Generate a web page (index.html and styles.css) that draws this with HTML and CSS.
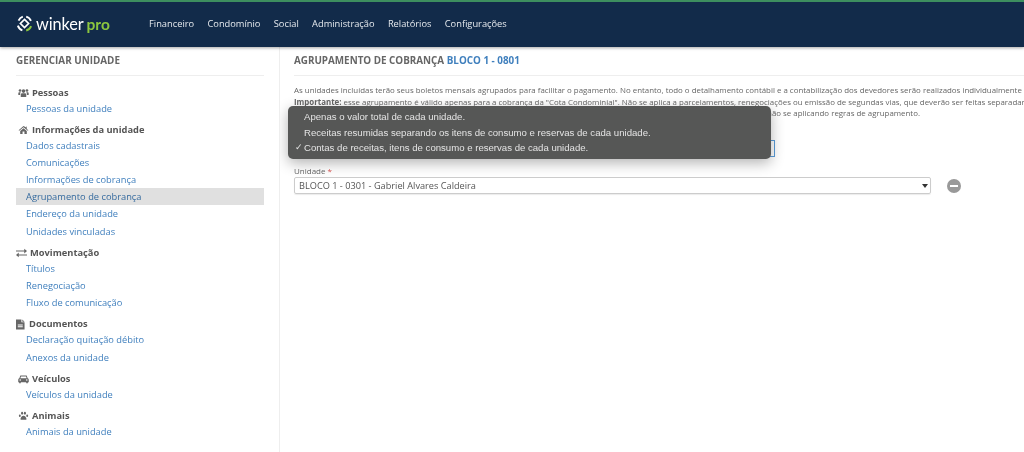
FILE: index.html
```html
<!DOCTYPE html>
<html lang="pt-BR">
<head>
<meta charset="utf-8">
<title>Agrupamento de cobrança</title>
<link rel="stylesheet" href="styles.css">
</head>
<body>
<header class="topbar">
  <div class="logo">
    <svg class="logo-mark" viewBox="0 0 20 20" width="17" height="17" aria-hidden="true">
      <path d="M3 6.500 A8.400 8.400 0 0 1 8 1.900" fill="none" stroke="#fff" stroke-width="2.200"/>
      <path d="M12 1.900 A8.400 8.400 0 0 1 17.600 7" fill="none" stroke="#fff" stroke-width="2.200"/>
      <path d="M2.200 12.500 A8.400 8.400 0 0 0 7.500 18" fill="none" stroke="#fff" stroke-width="2.200"/>
      <path d="M12 18.200 A8.400 8.400 0 0 0 17.800 13" fill="none" stroke="#8cc63f" stroke-width="2.200"/>
      <path d="M10 5.200 L14.800 10 L10 14.800 L5.200 10 Z" fill="none" stroke="#fff" stroke-width="2"/>
    </svg>
    <span class="logo-name">winker</span><span class="logo-pro">pro</span>
  </div>
  <nav class="mainnav">
    <a>Financeiro</a><a>Condomínio</a><a>Social</a><a>Administração</a><a>Relatórios</a><a>Configurações</a>
  </nav>
</header>
<div class="page">
  <aside class="sidebar">
    <h2 class="side-title">GERENCIAR UNIDADE</h2>
    <section class="group g-first">
      <h3><svg class="ico" viewBox="0 0 14 12"><circle cx="7" cy="3.600" r="2.300"/><circle cx="2.600" cy="2.800" r="1.700"/><circle cx="11.400" cy="2.800" r="1.700"/><path d="M3.500 11V8.200C3.500 6.800 4.600 6.200 5.500 6.200H8.500C9.400 6.200 10.500 6.800 10.500 8.200V11Z"/><path d="M.4 8.500V6.200C.4 5.300 1.100 5 1.800 5H3.600C3 5.600 2.700 6.500 2.700 7.500V8.500Z"/><path d="M13.600 8.500V6.200C13.600 5.300 12.900 5 12.200 5H10.400C11 5.600 11.300 6.500 11.300 7.500V8.500Z"/></svg>Pessoas</h3>
      <a>Pessoas da unidade</a>
    </section>
    <section class="group">
      <h3><svg class="ico" viewBox="0 0 14 12"><path d="M7 1 .8 6.300l.7.8L7 2.500l5.500 4.600.7-.8-2-1.700V1.500H10.500v1.300Z"/><path d="M2.800 7.300 7 3.800l4.200 3.500V11H8.200V8H5.800v3H2.800Z"/></svg>Informações da unidade</h3>
      <a>Dados cadastrais</a>
      <a>Comunicações</a>
      <a>Informações de cobrança</a>
      <a class="active">Agrupamento de cobrança</a>
      <a>Endereço da unidade</a>
      <a>Unidades vinculadas</a>
    </section>
    <section class="group">
      <h3 class="wide"><svg class="ico" viewBox="0 0 14 12"><path d="M0 3.300h10.500V1L14 4l-3.500 3V4.600H0Z" transform="translate(0 -.5)"/><path d="M14 7.400H3.500V5L0 8l3.500 3V8.700H14Z" transform="translate(0 .5)"/></svg>Movimentação</h3>
      <a>Títulos</a>
      <a>Renegociação</a>
      <a>Fluxo de comunicação</a>
    </section>
    <section class="group">
      <h3 class="doc"><svg class="ico-doc" viewBox="0 0 10 12"><path d="M0 .5h6v3h3.500v8H0Z"/><path d="M7 .5 9.500 3H7Z"/><path d="M2 6h5.500v1H2Zm0 2h5.500v1H2Z" fill="#fff"/></svg>Documentos</h3>
      <a>Declaração quitação débito</a>
      <a>Anexos da unidade</a>
    </section>
    <section class="group">
      <h3><svg class="ico" viewBox="0 0 14 12"><path d="M3 1.500h8l1.300 3.500c.9.300 1.400 1 1.400 1.900V10h-1.200v1.500h-2V10H3.500v1.500h-2V10H.3V6.900C.3 6 .8 5.300 1.700 5Zm.9 1.200L3 5h8l-.9-2.300ZM2.800 6.300a1 1 0 1 0 0 2 1 1 0 0 0 0-2Zm8.400 0a1 1 0 1 0 0 2 1 1 0 0 0 0-2Z" fill-rule="evenodd"/></svg>Veículos</h3>
      <a>Veículos da unidade</a>
    </section>
    <section class="group">
      <h3><svg class="ico" viewBox="0 0 14 12"><ellipse cx="5.200" cy="2.600" rx="1.300" ry="1.900"/><ellipse cx="8.800" cy="2.600" rx="1.300" ry="1.900"/><ellipse cx="2.300" cy="5.600" rx="1.200" ry="1.600"/><ellipse cx="11.700" cy="5.600" rx="1.200" ry="1.600"/><path d="M7 5.600c-1.800 0-3.800 2.400-3.800 4.100 0 1.500 1.700 1.200 3.800 1 2.100.2 3.800.5 3.800-1 0-1.700-2-4.100-3.800-4.100Z"/></svg>Animais</h3>
      <a>Animais da unidade</a>
    </section>
  </aside>
  <main class="content">
    <h1 class="page-title">AGRUPAMENTO DE COBRANÇA <span class="unit">BLOCO 1 - 0801</span></h1>
    <div class="intro">
      <p>As unidades incluídas terão seus boletos mensais agrupados para facilitar o pagamento. No entanto, todo o detalhamento contábil e a contabilização dos devedores serão realizados individualmente</p>
      <p><strong>Importante:</strong> esse agrupamento é válido apenas para a cobrança da "Cota Condominial". Não se aplica a parcelamentos, renegociações ou emissão de segundas vias, que deverão ser feitas separadamente</p>
      <p class="third">por unidade, não se aplicando regras de agrupamento.</p>
    </div>
    <div class="hidden-select"></div>
    <label class="field-label">Unidade <span class="req">*</span></label>
    <div class="unit-row">
      <div class="select">BLOCO 1 - 0301 - Gabriel Alvares Caldeira<span class="arrow"></span></div>
      <span class="remove"></span>
    </div>
    <ul class="popup">
      <li>Apenas o valor total de cada unidade.</li>
      <li>Receitas resumidas separando os itens de consumo e reservas de cada unidade.</li>
      <li class="checked">Contas de receitas, itens de consumo e reservas de cada unidade.</li>
    </ul>
  </main>
</div>
</body>
</html>
```
FILE: styles.css
```css
* { box-sizing: border-box; }
html, body { margin: 0; height: 100%; overflow: hidden; }
body { background: #fff; font-family: "Open Sans", "Liberation Sans", sans-serif; color: #666; font-size: 9.3px; filter: blur(.3px); }

.topbar { height: 47px; background: #122b4a; border-top: 2px solid #3d8f5f; padding: 0 0 2px 16px; display: flex; align-items: center; box-shadow: 0 1px 3px rgba(0,0,0,.35); position: relative; }
.logo { display: flex; align-items: center; width: 133px; color: #fff; }
.logo-mark { margin-right: 3px; flex: none; }
.logo-name { font-family: "Lato", sans-serif; font-size: 16.300px; letter-spacing: -.1px; }
.logo-pro { font-family: "Lato", sans-serif; font-size: 15.500px; font-weight: 700; color: #8cc63f; margin-left: 3px; }
.mainnav { display: flex; gap: 13.300px; }
.mainnav a { color: #e6eaee; font-size: 9.300px; }

.page { display: flex; height: 405px; }
.sidebar { width: 280px; flex: none; border-right: 1px solid #eee; padding: 0 15px 0 16px; }
.side-title { margin: 6px 0 0; height: 23px; line-height: 14px; font-size: 9.900px; font-weight: 700; color: #666; border-bottom: 1px solid #eee; }
.group { margin-bottom: 6px; }
.g-first { margin-top: 9.500px; }
.group h3 { margin: 0; height: 14px; line-height: 14px; font-size: 9.300px; font-weight: 700; color: #555; display: flex; align-items: center; padding-left: 1px; }
.ico { width: 11px; height: 10px; fill: #666; margin-left: 1px; margin-right: 3px; flex: none; }
.group h3.wide { padding-left: 0; }
.group h3.wide .ico { margin-left: 0; margin-right: 3px; }
.ico-doc { width: 9px; height: 11px; fill: #666; margin-right: 4px; flex: none; }
.group h3.doc { padding-left: 0; }
.group > a { display: block; height: 17.200px; line-height: 17.200px; padding-left: 10px; color: #3f7fbd; }
.group > a.active { background: #e0e0e0; color: #356a9e; }

.content { flex: 1; position: relative; padding: 0 0 0 14px; min-width: 0; overflow: hidden; }
.page-title { margin: 6px 0 0; height: 23px; line-height: 14px; font-size: 9.850px; font-weight: 700; color: #666; border-bottom: 1px solid #eee; width: 730px; }
.unit { color: #3f7fbd; }
.intro { margin-top: 9px; font-size: 7.900px; line-height: 11.500px; color: #666; white-space: nowrap; }
.intro p { margin: 0; }
.third { padding-left: 424px; }
.hidden-select { height: 17px; width: 481px; border: 1px solid #5b9dd9; margin-top: 20.500px; }
.field-label { display: block; margin-top: 7px; height: 13px; line-height: 13px; font-size: 8px; color: #666; }
.req { color: #d9534f; }
.unit-row { display: flex; align-items: center; }
.select { width: 637px; height: 17px; line-height: 16px; border: 1px solid #ccc; border-radius: 2px; padding-left: 4px; font-size: 9.200px; color: #555; position: relative; box-shadow: 0 1px 1px rgba(0,0,0,.08); }
.arrow { position: absolute; right: 2px; top: 6px; border: 3px solid transparent; border-top: 4px solid #333; border-bottom: 0; }
.remove { width: 14px; height: 14px; border-radius: 50%; background: #999; margin-left: 16px; position: relative; flex: none; }
.remove::after { content: ""; position: absolute; left: 3px; right: 3px; top: 6px; height: 2px; background: #fff; }

.popup { position: absolute; left: 8px; top: 59px; width: 483px; height: 53px; margin: 0; padding: 3px 0 0; list-style: none; background: #565756; border-radius: 5px; box-shadow: 0 4px 14px rgba(0,0,0,.3); color: #e4e4e4; font-family: "Liberation Sans", sans-serif; font-size: 9.600px; }
.popup li { height: 15.500px; line-height: 15.500px; padding-left: 16px; position: relative; }
.popup .checked::before { content: "\2713"; position: absolute; left: 7px; font-family: "DejaVu Sans", sans-serif; font-size: 9px; }
```
